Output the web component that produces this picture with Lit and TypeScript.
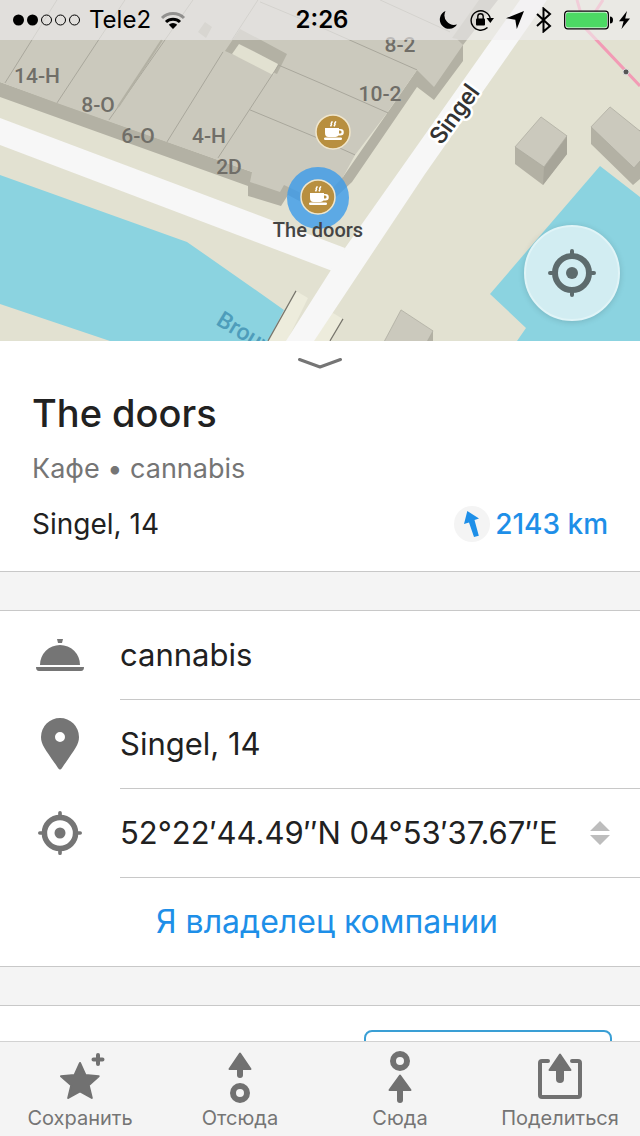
import { LitElement, html, css, svg } from "lit";
import { customElement, property } from "lit/decorators.js";

const cup = svg`
  <circle r="17" fill="#b88f3f" stroke="#f0e6cc" stroke-width="1.5"/>
  <path fill="#fff" d="M-8-4H6V-3h1.500a3.200 3.200 0 0 1 0 6.600H5.500Q4.500 5 2.500 5h-7Q-8 5-8 1z"/>
  <path fill="#b88f3f" d="M6-1.500h1a1.400 1.400 0 0 1 0 3.200H6z"/>
  <rect x="-9" y="5.500" width="18" height="2.500" rx="1.200" fill="#fff"/>
  <path d="M-2.500-5.500l1-2-.3-1 1.200-2M1-5.500l1-2-.3-1 1.200-2" stroke="#fff" stroke-width="1.500" fill="none"/>`;

const crosshair = (size: number, color: string) => html`
  <svg width=${size} height=${size} viewBox="0 0 48 48" aria-hidden="true">
    <circle cx="24" cy="24" r="17" fill="none" stroke=${color} stroke-width="6"/>
    <circle cx="24" cy="24" r="6" fill=${color}/>
    <path d="M24 2v5M24 41v5M2 24h5M41 24h5" stroke=${color} stroke-width="4" stroke-linecap="round"/>
  </svg>`;

@customElement("status-bar")
class StatusBar extends LitElement {
  static styles = css`
    :host {
      display: grid;
      grid-template-columns: 1fr auto 1fr;
      align-items: center;
      height: 40px;
      padding: 0 9px 0 13px;
      background: rgba(240, 238, 240, 0.6);
      color: #000;
      font-size: 24px;
      line-height: 40px;
    }
    .side { display: flex; align-items: center; gap: 9px; }
    .right { justify-content: flex-end; gap: 12px; }
    .time { font-weight: 600; }
    .power { display: flex; align-items: center; gap: 5px; }
    svg { display: block; }
  `;
  render() {
    return html`
      <div class="side">
        <svg width="67" height="12" viewBox="0 0 67 12" aria-hidden="true">
          <circle cx="5.500" cy="6" r="5.500"/><circle cx="19.500" cy="6" r="5.500"/>
          <g fill="none" stroke="#000" stroke-width="1"><circle cx="33.500" cy="6" r="5"/><circle cx="47.500" cy="6" r="5"/><circle cx="61.500" cy="6" r="5"/></g>
        </svg>
        <span>Tele2</span>
        <svg width="26" height="20" viewBox="0 0 26 20" aria-hidden="true">
          <g fill="none" stroke-width="3"><path d="M2 8a15.500 15.500 0 0 1 22 0" stroke="#000" stroke-opacity=".35"/><path d="M6 12a10 10 0 0 1 14 0" stroke="#000"/></g>
          <path d="M13 19l-4.200-4.200a6 6 0 0 1 8.400 0z"/>
        </svg>
      </div>
      <span class="time">2:26</span>
      <div class="side right">
        <svg width="20" height="20" viewBox="0 0 20 20" aria-hidden="true"><path d="M7.500 1A9.300 9.300 0 1 0 19 14.500 9.700 9.700 0 0 1 7.500 1z"/></svg>
        <svg width="24" height="22" viewBox="0 0 24 22" aria-hidden="true">
          <path d="M17.500 18.600A9.700 9.700 0 1 1 20.200 9" fill="none" stroke="#000" stroke-width="1.400"/>
          <path d="M16.500 9h7.500l-3.700 5z"/><rect x="6" y="9.500" width="9" height="7" rx="1"/>
          <path d="M7.800 10V7.500a2.700 2.700 0 0 1 5.400 0V10" fill="none" stroke="#000" stroke-width="1.400"/>
        </svg>
        <svg width="18" height="18" viewBox="0 0 18 18" aria-hidden="true"><path d="M18 0L10.800 18 9.300 8.700 0 7.200z"/></svg>
        <svg width="16" height="26" viewBox="0 0 16 26" aria-hidden="true"><path d="M1 7l13 12-6.500 5.500V1.500L14 7 1 19" fill="none" stroke="#000" stroke-width="2"/></svg>
        <div class="power">
          <svg width="49" height="20" viewBox="0 0 49 20" aria-hidden="true">
            <rect x=".7" y="1.200" width="43.600" height="17.600" rx="3" fill="#fff" stroke="#000" stroke-width="1.300"/>
            <rect x="2" y="2.500" width="41" height="15" rx="2" fill="#4cd964"/><path d="M46 6.500q3 0 3 3.500t-3 3.500z"/>
          </svg>
          <svg width="13" height="20" viewBox="0 0 13 20" aria-hidden="true"><path d="M9 1L1 11.300h4.600L3.500 19 12 8.500H7.200z"/></svg>
        </div>
      </div>`;
  }
}

@customElement("map-view")
class MapView extends LitElement {
  static styles = css`
    :host { display: block; position: relative; height: 30vh; flex: none; overflow: hidden; background: #e2e1d1; }
    .map { display: block; width: 100%; height: 100%; }
    .house { font: 500 21px Roboto, sans-serif; fill: #706e68; }
    .road { font: 500 24px Roboto, sans-serif; fill: #333; stroke: #fff; stroke-width: 5px; stroke-linejoin: round; paint-order: stroke; }
    .canal { font: 500 23px Roboto, sans-serif; fill: #4e9dbb; }
    .place { font: 500 20px Roboto, sans-serif; fill: #444; }
    .status { position: absolute; inset: 0 0 auto; }
    .locate {
      position: absolute; right: 20px; bottom: 20px; width: 96px; height: 96px; padding: 0;
      display: grid; place-items: center; border: 2px solid #e0f4f7; border-radius: 50%;
      background: #d2edf2; box-shadow: 0 1px 6px rgba(0, 0, 0, 0.15);
    }
  `;
  render() {
    return html`
      <svg class="map" viewBox="0 0 640 341" preserveAspectRatio="xMidYMid slice" role="img" aria-label="Singel">
        <rect width="640" height="341" fill="#e2e1d1"/>
        <path fill="#8bd3e0" d="M0 175L187 242 284 310 268 341H110L0 304zM600 166L490 294 526 328 517 341H640V197z"/>
        <path fill="#edecdc" d="M296 291l12 7-21 43h-18zM320 316l13-3 10 6-13 22h-20z"/>
        <g fill="#f7f7f7">
          <path d="M0 118L345 248 335 272 0 145z"/>
          <path d="M520 0h27L425 174 314 341H286L345 248z"/>
        </g>
        <path fill="none" stroke="#77756c" stroke-width="1.200" d="M296 291L268 341M343 319l-13 22"/>
        <path fill="#b3b1a4" d="M0 82L252 172 284 185 343 177 417 70 463 44V61L434 100 417 87 352 182 320 212 288 195 281 206 248 196V186L0 97z"/>
        <path fill="#b7b5a9" d="M478 0h20L463 45 450 37z"/>
        <path fill="#cbc9bd" d="M0 0H479L452 38 457 39 463 45 434 87 417 70 387 113 355 155 343 177 320 202 284 185 280 192 250 182 252 172 218 160 167 142 57 103 0 82z"/>
        <path fill="#b3b1a4" d="M240 29L287 54 277 74 225 51zM205 22l7 5-6 11-8-6z"/>
        <path fill="#e2e1d1" d="M239 44L278 64 273 75 232 54z"/>
        <path fill="none" stroke="#a9a79c" d="M57 0L5 83M125 0L57 103M193 0L109 120M223 52L167 142M278 66L218 158M258 0L232 40M260 2L320 27 417 70M380 0L450 32M278 65L320 83 388 113M250 110L315 137 355 155"/>
        <path fill="none" stroke="#b3b1a4" stroke-width="2" d="M162 40L118 107"/>
        <path fill="#b3b1a4" d="M515 147v17l28 21 24-31V136zM591 127v17l42 41 7-6V130zM433 331v10h-6z"/>
        <path fill="#a7a599" d="M567 136v18l-24 31 1-18z"/>
        <path fill="#cbc9bd" stroke="#a9a79c" stroke-width=".7" d="M541 117L567 136 544 167 515 147zM610 107L641 132V160L634 168 591 127zM401 310L433 331 427 342H384z"/>
        <g fill="none" stroke="#f29bb5" stroke-width="3"><path d="M577 0L585 28 640 86M603 0L585 28"/></g>
        <circle cx="626" cy="72" r="3" fill="#555" stroke="#ddd"/>
        <g class="house" text-anchor="middle">
          <text x="37" y="83">14-H</text><text x="98" y="112">8-O</text><text x="138" y="143">6-O</text>
          <text x="209" y="143">4-H</text><text x="229" y="174">2D</text>
          <text x="400" y="52">8-2</text><text x="380" y="101">10-2</text>
        </g>
        <text class="road" text-anchor="middle" transform="translate(461 119) rotate(-54)">Singel</text>
        <text class="canal" transform="translate(215 324) rotate(31)">Brouw</text>
        <circle cx="318" cy="198" r="31" fill="#3b9bea" fill-opacity=".8"/>
        <g transform="translate(318 197)">${cup}</g>
        <g transform="translate(333 132)">${cup}</g>
        <text class="place" x="318" y="237" text-anchor="middle">The doors</text>
      </svg>
      <status-bar class="status"></status-bar>
      <button class="locate" aria-label="Моё местоположение">${crosshair(48, "#5d6b6d")}</button>`;
  }
}

@customElement("place-card")
class PlaceCard extends LitElement {
  static styles = css`
    :host { display: block; flex: 1; min-height: 0; overflow: hidden; background: #f4f4f4; color: #212121; }
    svg { display: block; }
    button { font: inherit; border: 0; background: none; padding: 0; }
    .head { background: #fff; border-bottom: 1px solid #c8c8c8; padding: 0 32px 18px; }
    .grip { display: block; margin: 0 auto; padding: 16px 0 11px; }
    h1 { margin: 0; font-size: 38px; font-weight: 500; line-height: 64px; }
    .kind { margin: 0; font-size: 27px; line-height: 48px; color: #757575; }
    .where { display: flex; align-items: center; justify-content: space-between; margin: 10px 0 0; font-size: 28px; line-height: 40px; padding: 0 0 7px; height: 43px; }
    .distance { display: flex; align-items: center; gap: 5px; color: #1e8fe8; font-weight: 500; }
    .group { margin-top: 38px; background: #fff; border: solid #c8c8c8; border-width: 1px 0; padding-left: 120px; }
    .row { display: flex; align-items: center; height: 88px; border-bottom: 1px solid #c8c8c8; font-size: 31px; padding-right: 28px; }
    .icon { flex: none; width: 120px; margin-left: -120px; display: grid; place-items: center; }
    .value { flex: 1; white-space: nowrap; }
    .owner { display: block; line-height: 88px; font-size: 32px; color: #1e8fe8; text-decoration: none; text-align: center; margin-left: -106px; }
    .next { display: flex; justify-content: flex-end; padding: 24px 28px; }
    .action { box-sizing: border-box; width: 248px; height: 72px; border: 2px solid #3a9fd5; border-radius: 8px; }
  `;
  render() {
    return html`
      <section class="head">
        <button class="grip" aria-label="Свернуть">
          <svg width="44" height="13" viewBox="0 0 44 13"><path d="M1.500 2.500L22 10 42.500 2.500" fill="none" stroke="#757575" stroke-width="3" stroke-linecap="round" stroke-linejoin="round"/></svg>
        </button>
        <h1>The doors</h1>
        <p class="kind">Кафе • cannabis</p>
        <div class="where">
          <span>Singel, 14</span>
          <span class="distance">
            <svg width="36" height="36" viewBox="0 0 36 36" aria-hidden="true"><circle cx="18" cy="18" r="18" fill="#f4f4f4"/>
            <path d="M13.300 5L25 12.500 20.500 14 24.800 29.800 20 31 15 16.500 10 18z" fill="#1e8fe8"/></svg>
            2143 km
          </span>
        </div>
      </section>
      <section class="group">
        <div class="row">
          <span class="icon"><svg width="48" height="32" viewBox="0 0 48 32" fill="#757575"><path d="M21 0h6l-1 4h-4zM4 26a20 20 0 0 1 40 0zM0 28h48q0 4-3 4H3q-3 0-3-4z"/></svg></span>
          <span class="value">cannabis</span>
        </div>
        <div class="row">
          <span class="icon"><svg width="38" height="52" viewBox="0 0 38 52" fill="#757575"><path fill-rule="evenodd" d="M19 0A19 19 0 0 1 38 19C38 27 33 32 21 50q-2 3-4 0C5 32 0 27 0 19A19 19 0 0 1 19 0zm0 14a5 5 0 1 0 0 10 5 5 0 0 0 0-10z"/></svg></span>
          <span class="value">Singel, 14</span>
        </div>
        <div class="row">
          <span class="icon">${crosshair(44, "#757575")}</span>
          <span class="value">52°22′44.49″N 04°53′37.67″E</span>
          <button aria-label="Формат координат"><svg width="24" height="24" viewBox="0 0 24 24" fill="#bdbdbd"><path d="M12 0l10 10H2zM2 14h20L12 24z"/></svg></button>
        </div>
        <a class="owner" href="#owner">Я владелец компании</a>
      </section>
      <section class="group next"><button class="action" aria-label="Подробнее"></button></section>`;
  }
}

@customElement("tab-button")
class TabButton extends LitElement {
  @property() label = "";
  @property() icon = "";
  static styles = css`
    :host { display: block; }
    button { width: 100%; border: 0; padding: 7px 0 5px; background: none; font: inherit; font-size: 20px; line-height: 26px; color: #757575; display: grid; justify-items: center; gap: 1px; }
    svg { display: block; }
  `;
  glyph() {
    if (this.icon === "save") return svg`
      <path d="M28 14l5.400 12 13.300 1.200-10 9L39.800 49 28 42.400 16.200 49 19.300 36.200 9 27.200 22.600 26z" stroke="#717171" stroke-width="2" stroke-linejoin="round"/>
      <path d="M46 6v9M41.500 10.500h9" stroke="#717171" stroke-width="4" stroke-linecap="round" fill="none"/>`;
    if (this.icon === "from") return svg`
      <path d="M28 4.500L38.500 20h-21z" stroke="#717171" stroke-width="2" stroke-linejoin="round"/><path d="M28 18v8" stroke="#717171" stroke-width="6" stroke-linecap="round"/>
      <circle cx="28" cy="44" r="7" fill="none" stroke="#717171" stroke-width="6"/>`;
    if (this.icon === "to") return svg`
      <circle cx="28" cy="12" r="7" fill="none" stroke="#717171" stroke-width="6"/>
      <path d="M28 26.500L38.500 41h-21z" stroke="#717171" stroke-width="2" stroke-linejoin="round"/><path d="M28 40v11" stroke="#717171" stroke-width="6" stroke-linecap="round"/>`;
    return svg`
      <path d="M16 12H10q-2 0-2 2V46q0 2 2 2H46q2 0 2-2V14q0-2-2-2H40" fill="none" stroke="#717171" stroke-width="4" stroke-linecap="round"/>
      <path d="M28 5.500L38.500 21h-21z" stroke="#717171" stroke-width="2" stroke-linejoin="round"/><path d="M28 19v11" stroke="#717171" stroke-width="8" stroke-linecap="round"/>`;
  }
  render() {
    return html`<button><svg width="56" height="55" viewBox="0 0 56 55" fill="#717171" aria-hidden="true">${this.glyph()}</svg><span>${this.label}</span></button>`;
  }
}

@customElement("app-root")
class AppRoot extends LitElement {
  static styles = css`
    :host { display: flex; flex-direction: column; height: 100vh; background: #f4f4f4; font-family: Inter, "Noto Sans", sans-serif; }
    .tabs { flex: none; display: grid; grid-template-columns: repeat(4, 1fr); border-top: 1px solid #d2d2d2; background: #f4f4f4; }
  `;
  tabs = [
    ["save", "Сохранить"],
    ["from", "Отсюда"],
    ["to", "Сюда"],
    ["share", "Поделиться"],
  ];
  render() {
    return html`
      <map-view></map-view>
      <place-card></place-card>
      <nav class="tabs">${this.tabs.map(([icon, label]) => html`<tab-button .icon=${icon} .label=${label}></tab-button>`)}</nav>`;
  }
}
